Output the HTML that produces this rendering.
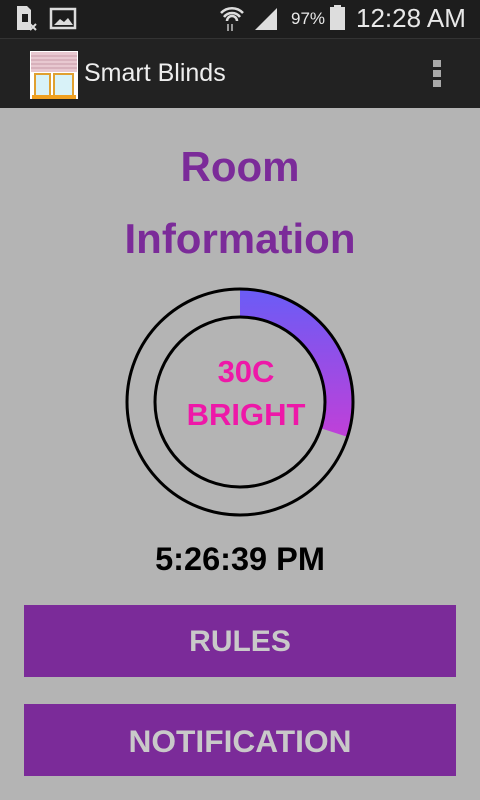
<!DOCTYPE html>
<html><head><meta charset="utf-8"><style>
*{margin:0;padding:0;box-sizing:border-box}
body{width:480px;height:800px;background:#b4b4b4;font-family:"Liberation Sans",sans-serif;position:relative;overflow:hidden}
.sb{position:absolute;top:0;left:0;width:480px;height:38px;background:#1d1d1d;color:#e8e8e8}
.ab{position:absolute;top:38px;left:0;width:480px;height:70px;background:#222;border-top:1px solid #333}
.ab .t{position:absolute;left:84px;top:20px;font-size:25px;color:#eee}
.h{position:absolute;left:0;width:480px;text-align:center;color:#7b2b99;font-weight:bold;font-size:42px}
.btn{position:absolute;left:24px;width:432px;height:72px;background:#7b2b99;color:#c9c9c9;font-weight:bold;font-size:30px;text-align:center;line-height:74px}
</style></head><body>
<div class="sb">
<svg width="480" height="38" style="position:absolute;left:0;top:0">
<path d="M17 6h10l4 4v20H17z" fill="#ddd"/><rect x="22" y="14" width="6" height="8" fill="#1d1d1d"/>
<path d="M30 24l6 6M36 24l-6 6" stroke="#ddd" stroke-width="2"/>
<rect x="51" y="9" width="24" height="19" fill="none" stroke="#ddd" stroke-width="2.5"/>
<path d="M54 25l6-6 4 3 4-4 5 7z" fill="#ddd"/>
<path d="M221 13a15 15 0 0 1 22 0M224 17a10 10 0 0 1 16 0M227 21a5 5 0 0 1 10 0" stroke="#ddd" stroke-width="2.5" fill="none"/>
<path d="M228 24v7M232 24v7" stroke="#999" stroke-width="2"/>
<path d="M255 30L277 8v22z" fill="#ddd"/>
<rect x="330" y="7" width="15" height="23" fill="#ddd"/><rect x="334" y="5" width="7" height="3" fill="#ddd"/>
</svg>
<div style="position:absolute;left:291px;top:9px;font-size:17px">97%</div>
<div style="position:absolute;left:356px;top:3px;font-size:26px">12:28 AM</div>
</div>
<div class="ab">
<svg width="50" height="50" style="position:absolute;left:30px;top:12px">
<rect x="0" y="0" width="48" height="48" fill="#fff"/>
<rect x="1" y="1" width="46" height="20" fill="#e8c8d0"/>
<path d="M1 5h46M1 9h46M1 13h46M1 17h46" stroke="#c89aa8"/>
<rect x="5" y="23" width="15" height="22" fill="#d8f2f8" stroke="#e0a030" stroke-width="2"/>
<rect x="24" y="23" width="19" height="22" fill="#d8f2f8" stroke="#e0a030" stroke-width="2"/>
<rect x="2" y="44" width="44" height="4" fill="#f0a020"/>
</svg>
<div class="t">Smart Blinds</div>
<div style="position:absolute;left:433px;top:21px;width:8px">
<div style="height:7px;background:#aaa;margin-bottom:3px"></div><div style="height:7px;background:#aaa;margin-bottom:3px"></div><div style="height:7px;background:#aaa"></div></div>
</div>
<div class="h" style="top:143px">Room</div>
<div class="h" style="top:215px">Information</div>
<svg width="480" height="240" style="position:absolute;left:0;top:282px">
<defs><linearGradient id="g" x1="0" y1="0" x2="0" y2="1"><stop offset="0" stop-color="#6a5cf6"/><stop offset="1" stop-color="#c040d8"/></linearGradient></defs>
<path d="M240 7A113 113 0 0 1 347.5 154.9L320.8 146.3A85 85 0 0 0 240 35Z" fill="url(#g)"/>
<circle cx="240" cy="120" r="113" fill="none" stroke="#000" stroke-width="3"/>
<circle cx="240" cy="120" r="85" fill="none" stroke="#000" stroke-width="3"/>
</svg>
<div style="position:absolute;left:6px;width:480px;text-align:center;top:350px;color:#ee18a8;font-weight:bold;font-size:31px;line-height:43px">30C<br>BRIGHT</div>
<div style="position:absolute;left:0;width:480px;text-align:center;top:541px;font-weight:bold;font-size:32.5px;color:#000">5:26:39 PM</div>
<div class="btn" style="top:605px">RULES</div>
<div class="btn" style="top:704px;font-size:31.7px">NOTIFICATION</div>
</body></html>
